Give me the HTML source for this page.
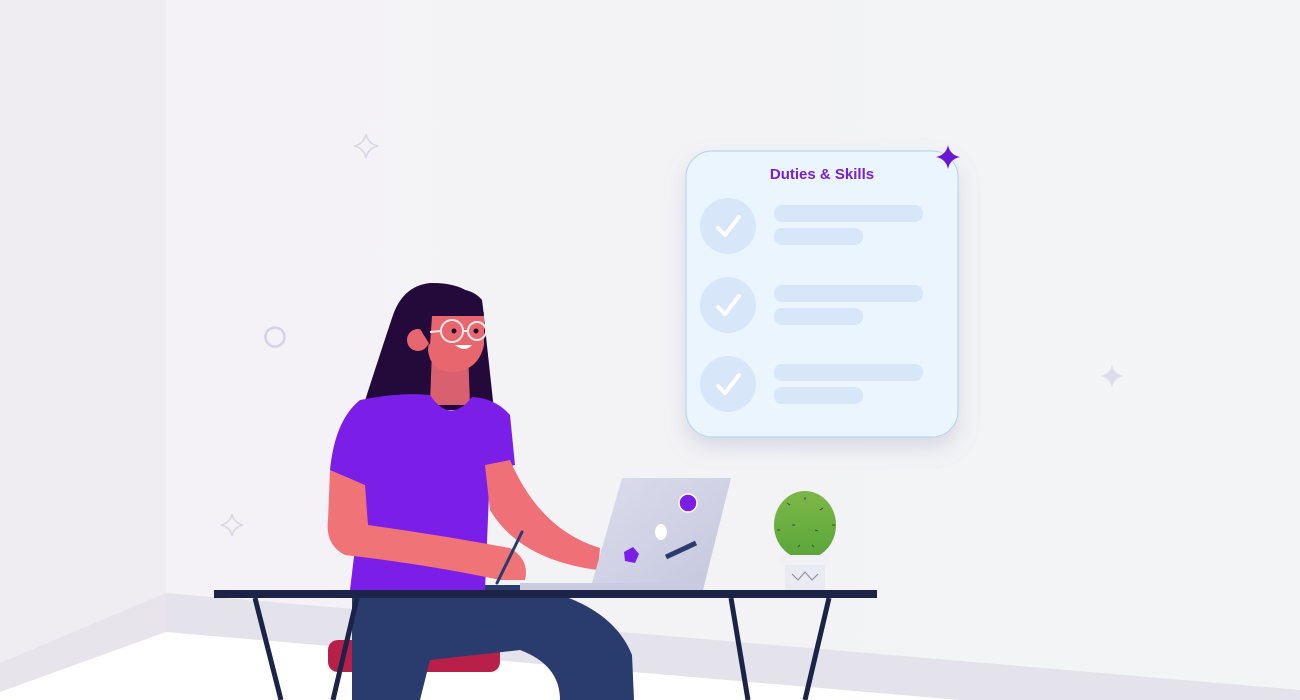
<!DOCTYPE html>
<html><head><meta charset="utf-8"><style>
html,body{margin:0;padding:0;width:1300px;height:700px;overflow:hidden;background:#f3f3f6}
svg{display:block}
</style></head><body>
<svg width="1300" height="700" viewBox="0 0 1300 700" xmlns="http://www.w3.org/2000/svg">
<defs>
<linearGradient id="wall" x1="0" y1="0" x2="1" y2="0"><stop offset="0" stop-color="#f4f2f6"/><stop offset="1" stop-color="#f2f4f6"/></linearGradient>
<linearGradient id="cact" x1="0" y1="0" x2="0" y2="1"><stop offset="0" stop-color="#7cb848"/><stop offset="1" stop-color="#5aa53a"/></linearGradient>
<linearGradient id="lap" x1="0" y1="0" x2="1" y2="1"><stop offset="0" stop-color="#dcdcec"/><stop offset="1" stop-color="#c4c7de"/></linearGradient>
<filter id="sh" x="-20%" y="-20%" width="140%" height="150%"><feDropShadow dx="0" dy="10" stdDeviation="10" flood-color="#9a9ab8" flood-opacity="0.3"/></filter>
</defs>
<rect width="1300" height="700" fill="url(#wall)"/>
<rect width="166" height="700" fill="#efecf2"/>
<polygon points="166,593 1300,690 1300,700 166,700" fill="#e4e2eb"/>
<polygon points="0,663 166,593 166,700 0,700" fill="#e7e4ec"/>
<polygon points="166,632 960,700 0,700 0,692" fill="#ffffff"/>
<path d="M366 134 Q368 144 378 146 Q368 148 366 158 Q364 148 354 146 Q364 144 366 134Z" fill="none" stroke="#d8d6e4" stroke-width="1.5"/>
<path d="M232 514 Q234 523 243 525 Q234 527 232 536 Q230 527 221 525 Q230 523 232 514Z" fill="none" stroke="#d8d6e4" stroke-width="1.5"/>
<path d="M1112 365 Q1114 374 1123 376 Q1114 378 1112 387 Q1110 378 1101 376 Q1110 374 1112 365Z" fill="#dcdcec"/>
<circle cx="275" cy="337" r="9.5" fill="none" stroke="#d4d2ea" stroke-width="2.5"/>
<rect x="686" y="151" width="272" height="286" rx="26" fill="#ebf5fd" stroke="#b9d7f0" stroke-width="1.2" filter="url(#sh)"/>
<text x="822" y="179" text-anchor="middle" font-family="Liberation Sans, sans-serif" font-weight="bold" font-size="15" fill="#7a1fd6">Duties &amp; Skills</text>
<path d="M948 145 Q950 155 960 157 Q950 159 948 169 Q946 159 936 157 Q946 155 948 145Z" fill="#6a16d4"/>
<g fill="#d8e6f9">
<circle cx="728" cy="226" r="28"/><circle cx="728" cy="305" r="28"/><circle cx="728" cy="384" r="28"/>
<rect x="774" y="205" width="149" height="17" rx="8"/><rect x="774" y="228" width="89" height="17" rx="8"/>
<rect x="774" y="285" width="149" height="17" rx="8"/><rect x="774" y="308" width="89" height="17" rx="8"/>
<rect x="774" y="364" width="149" height="17" rx="8"/><rect x="774" y="387" width="89" height="17" rx="8"/>
</g>
<g fill="none" stroke="#ffffff" stroke-width="4" stroke-linecap="round" stroke-linejoin="round">
<path d="M718 228 L725 235 L739 217"/><path d="M718 307 L725 314 L739 296"/><path d="M718 386 L725 393 L739 375"/>
</g>
<rect x="328" y="640" width="172" height="32" rx="10" fill="#b8204a"/>
<path d="M352 585 L520 585 Q610 600 632 655 L634 700 L560 700 Q560 665 520 650 L430 660 L420 700 L352 700Z" fill="#2a3b6d"/>
<!-- hair back -->
<path d="M430 283 Q478 282 484 318 L494 410 L362 410 Q378 360 392 318 Q402 286 430 283Z" fill="#240a3a"/>
<path d="M432 350 L468 350 L470 405 L430 405Z" fill="#d9606e"/>
<path d="M360 400 Q400 392 430 395 Q450 425 472 397 Q495 398 510 415 L515 465 L490 470 L485 590 L350 590 L362 490 L330 470 Q335 420 360 400Z" fill="#7a1ee8"/>
<path d="M485 465 L510 460 Q540 530 600 548 L598 570 Q520 560 490 510Z" fill="#ef7076"/>
<path d="M330 470 L365 485 L368 525 Q440 535 510 548 Q530 560 525 580 L500 580 Q430 565 345 555 Q325 545 328 520Z" fill="#f07378"/>
<line x1="522" y1="532" x2="497" y2="583" stroke="#2a3b6d" stroke-width="3" stroke-linecap="round"/>
<!-- head -->
<path d="M432 312 L484 312 L484 345 Q478 372 450 372 Q430 370 428 350Z" fill="#e8676f"/>
<circle cx="418" cy="340" r="11" fill="#e8676f"/>
<path d="M407 325 Q412 300 440 290 Q470 285 482 300 L484 316 L432 316 L430 345 L420 329Z" fill="#240a3a"/>
<g fill="none" stroke="#fbe8ea" stroke-width="2"><circle cx="452" cy="331" r="11"/><circle cx="477" cy="331" r="9"/><path d="M441 331 L430 332 M463 331 L468 331"/></g>
<circle cx="454" cy="331" r="2.5" fill="#1a0a2a"/><circle cx="476" cy="331" r="2.5" fill="#1a0a2a"/>
<path d="M455 345 Q465 353 472 345Z" fill="#fff"/>
<polygon points="622,478 731,478 703,590 590,590" fill="url(#lap)"/>
<rect x="520" y="583" width="180" height="7" fill="#c9cbe0"/>
<circle cx="688" cy="503" r="9" fill="#7a1ee8" stroke="#fff" stroke-width="1.5"/>
<ellipse cx="661" cy="532" rx="6" ry="8" fill="#fff"/>
<polygon points="624,552 633,547 639,554 635,563 625,561" fill="#7a1ee8"/>
<line x1="666" y1="557" x2="696" y2="543" stroke="#2a3b6d" stroke-width="5"/>
<ellipse cx="805" cy="525" rx="31" ry="34" fill="url(#cact)"/>
<g stroke="#3a4a3a" stroke-width="1"><path d="M790 505 l-3 -2 M805 500 l0 -3 M820 510 l3 -2 M795 525 l-3 0 M815 530 l3 1 M800 545 l-2 2 M812 545 l2 2 M780 530 l-3 0 M832 525 l3 0"/></g>
<rect x="780" y="555" width="50" height="10" fill="#f0f0f6"/>
<rect x="785" y="565" width="40" height="25" fill="#eaeaf2"/>
<path d="M792 574 L798 580 L805 572 L812 580 L818 574" fill="none" stroke="#8a8aa8" stroke-width="1"/>
<rect x="214" y="590" width="663" height="8" fill="#1b2447"/>
<g stroke="#1b2447" stroke-width="5"><line x1="255" y1="598" x2="281" y2="700"/><line x1="357" y1="598" x2="333" y2="700"/><line x1="731" y1="598" x2="748" y2="700"/><line x1="829" y1="598" x2="805" y2="700"/></g>
</svg>
</body></html>
